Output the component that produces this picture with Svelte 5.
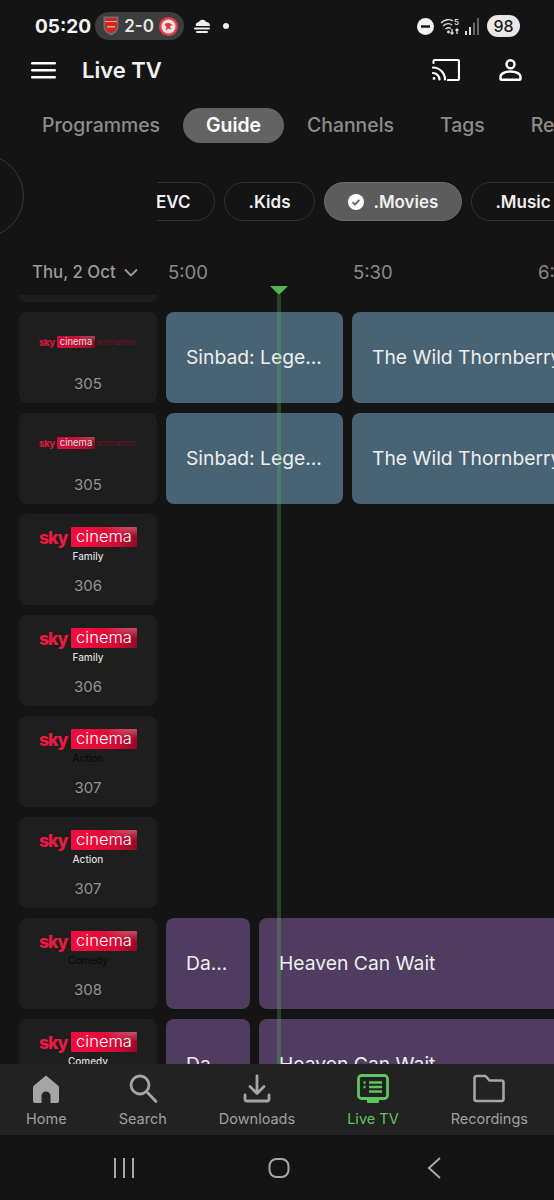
<script>
  const tabs = ["Programmes", "Guide", "Channels", "Tags", "Recordings"];
  const times = ["5:00", "5:30", "6:00"];

  const sinbad = [
    { title: "Sinbad: Lege...", width: 177 },
    { title: "The Wild Thornberrys Movie", width: 300 }
  ];
  const comedy = [
    { title: "Da...", width: 84 },
    { title: "Heaven Can Wait", width: 400 }
  ];

  const rows = [
    { num: "305", sub: "animation", kind: "teal", shows: sinbad },
    { num: "305", sub: "animation", kind: "teal", shows: sinbad },
    { num: "306", sub: "Family", shows: [] },
    { num: "306", sub: "Family", shows: [] },
    { num: "307", sub: "Action", dark: true, shows: [] },
    { num: "307", sub: "Action", shows: [] },
    { num: "308", sub: "Comedy", dark: true, kind: "purple", shows: comedy },
    { num: "308", sub: "Comedy", kind: "purple", shows: comedy }
  ];
</script>

<div class="screen">
  <div class="status">
    <span class="clock">05:20</span>
    <div class="score">
      <svg width="16" height="20" viewBox="0 0 16 20">
        <path d="M.5.500h15v10c0 4-3 7-7.500 9C3.500 17.500.5 14.500.5 10.500z" fill="#6b6f7c" />
        <path d="M2 2h12v3H2z" fill="#d8202c" />
        <path d="M2 5h12v1.200H2z" fill="#d9b45a" />
        <path d="M2 6.200h12v4.300c0 3-2 5.300-6 7-4-1.700-6-4-6-7z" fill="#d8202c" />
        <path d="M4 10h8v1.500H4z" fill="#d9b45a" />
      </svg>
      <span>2-0</span>
      <svg width="19" height="19" viewBox="0 0 19 19">
        <circle cx="9.500" cy="9.500" r="9.500" fill="#e2404c" />
        <circle cx="9.500" cy="9.500" r="7" fill="#f6dfe0" />
        <path d="M5.500 7.500c3-2.500 6.500-1.500 8 1-1 0-2 .2-2.700 1l1.700 3-3-1-3 2 1-3.500z" fill="#dc3844" />
      </svg>
    </div>
    <svg class="cloud" width="18" height="16" viewBox="0 0 18 16">
      <path d="M3 8c-1-3 2-4 3-4 1-3 6-3 7 0 3 0 4 2 4 4z" fill="#eee" />
      <rect x="1" y="9.500" width="16" height="2" rx="1" fill="#eee" />
      <rect x="3" y="13" width="12" height="2" rx="1" fill="#eee" />
    </svg>
    <span class="dot"></span>
    <span class="grow"></span>
    <svg width="17" height="17" viewBox="0 0 17 17">
      <circle cx="8.500" cy="8.500" r="8.500" fill="#f2f2f2" />
      <rect x="4" y="7.300" width="9" height="2.400" fill="#141414" />
    </svg>
    <svg class="wifi" width="21" height="19" viewBox="0 0 21 19" fill="none" stroke="#ddd" stroke-width="1.300">
      <path d="M1 6c4-4 9-4 12-2" />
      <path d="M3 9c3-3 7-3 9-1" />
      <path d="M5.500 12c2-1.500 4-1.500 5.500-.5" />
      <circle cx="8.500" cy="15" r=".8" fill="#ddd" />
      <path d="M12 12v5M10.500 15.500l1.500 1.500 1.500-1.500M17 17v-5M15.500 13.500l1.500-1.500 1.500 1.500" />
      <text x="14" y="8" class="wifi-five">5</text>
    </svg>
    <svg class="signal" width="15" height="17" viewBox="0 0 15 17">
      <rect x="0" y="13" width="2" height="4" fill="#ddd" />
      <rect x="4" y="9" width="2" height="8" fill="#ddd" />
      <rect x="8" y="4.500" width="2" height="12.500" fill="#666" />
      <rect x="12" y="0" width="2" height="17" fill="#666" />
    </svg>
    <span class="battery">98</span>
  </div>

  <header>
    <svg width="25" height="17" viewBox="0 0 25 17">
      <rect y="0" width="25" height="2.600" rx="1.300" fill="#fff" />
      <rect y="7" width="25" height="2.600" rx="1.300" fill="#fff" />
      <rect y="14" width="25" height="2.600" rx="1.300" fill="#fff" />
    </svg>
    <h1>Live TV</h1>
    <span class="grow"></span>
    <svg width="28" height="22" viewBox="0 0 28 22" fill="none" stroke="#fff" stroke-width="2.200" stroke-linecap="round">
      <path d="M1.500 4V2.500a1.500 1.500 0 0 1 1.500-1.500h22.500a1.500 1.500 0 0 1 1.500 1.500v17a1.500 1.500 0 0 1-1.500 1.500H16" />
      <path d="M1 8.500c6.500 0 12 5.500 12 12" />
      <path d="M1 14c3.500 0 6.500 3 6.500 6.500" />
      <circle cx="2" cy="19.500" r="1.400" fill="#fff" stroke="none" />
    </svg>
    <svg class="person" width="23" height="22" viewBox="0 0 23 22" fill="none" stroke="#fff" stroke-width="2.400">
      <circle cx="11.500" cy="5.200" r="4" />
      <path d="M1.500 18c0-3.500 5-5.500 10-5.500s10 2 10 5.500v1.500a1.300 1.300 0 0 1-1.300 1.300H2.800a1.300 1.300 0 0 1-1.300-1.300z" />
    </svg>
  </header>

  <nav class="tabs">
    {#each tabs as tab}
      <span class="tab" class:active={tab === "Guide"}>{tab}</span>
    {/each}
  </nav>

  <div class="filters">
    <div class="filters-left"><span class="ring"></span></div>
    <div class="chips">
      <span class="chip evc">EVC</span>
      <span class="chip kids">.Kids</span>
      <span class="chip selected">
        <svg width="16" height="16" viewBox="0 0 16 16">
          <circle cx="8" cy="8" r="8" fill="#fff" />
          <path d="M4.500 8.200l2.400 2.400 4.400-4.800" fill="none" stroke="#666" stroke-width="1.800" />
        </svg>
        .Movies
      </span>
      <span class="chip">.Music</span>
    </div>
  </div>

  <div class="timeline">
    <div class="date-row">
      <div class="date">
        Thu, 2 Oct
        <svg width="14" height="9" viewBox="0 0 14 9" fill="none" stroke="#9c9c9c" stroke-width="1.800">
          <path d="M1 1.500l6 6 6-6" />
        </svg>
      </div>
      <div class="times">
        {#each times as time}
          <span class="time">{time}</span>
        {/each}
      </div>
    </div>

    <div class="guide">
      <div class="row"><div class="channel stub"></div></div>
      {#each rows as row}
        <div class="row">
          <div class="channel">
            {#if row.sub === "animation"}
              <div class="logo small">
                <span class="sky">sky</span>
                <span class="cinema">cinema</span>
                <span class="anim">animation</span>
              </div>
            {:else}
              <div class="logo">
                <span class="sky">sky</span>
                <span class="cinema">cinema</span>
              </div>
              <div class="sub" class:dark={row.dark}>{row.sub}</div>
            {/if}
            <div class="num">{row.num}</div>
          </div>
          {#each row.shows as show}
            <div class="show {row.kind}" style="width: {show.width}px">{show.title}</div>
          {/each}
        </div>
      {/each}
    </div>

    <div class="now">
      <span class="now-head"></span>
      <span class="now-line"></span>
    </div>
  </div>

  <nav class="bottom">
    <div class="item">
      <svg width="30" height="30" viewBox="0 0 30 30">
        <path d="M15 1.500L27 11.500c.6.500 1 1.300 1 2.100V27a2 2 0 0 1-2 2h-6.500v-7a4.500 4.500 0 0 0-9 0v7H4a2 2 0 0 1-2-2V13.600c0-.8.400-1.600 1-2.100z" fill="#a5a5a5" />
      </svg>
      <span>Home</span>
    </div>
    <div class="item">
      <svg width="30" height="30" viewBox="0 0 30 30" fill="none" stroke="#a5a5a5" stroke-width="2.800" stroke-linecap="round">
        <circle cx="12" cy="11" r="9" />
        <path d="M18.500 17.500L28 27.500" />
      </svg>
      <span>Search</span>
    </div>
    <div class="item">
      <svg width="30" height="30" viewBox="0 0 30 30" fill="none" stroke="#a5a5a5" stroke-width="2.800" stroke-linecap="round" stroke-linejoin="round">
        <path d="M15 2v17M8 12.500l7 7 7-7" />
        <path d="M3 21v4a2 2 0 0 0 2 2h20a2 2 0 0 0 2-2v-4" />
      </svg>
      <span>Downloads</span>
    </div>
    <div class="item on">
      <svg width="32" height="30" viewBox="0 0 32 30" fill="none">
        <rect x="1.500" y="1.500" width="29" height="23" rx="3" stroke="#5cc65c" stroke-width="2.800" />
        <rect x="10" y="25" width="12" height="4" rx="1" fill="#5cc65c" />
        <path d="M6.500 8.500h2M12 8.500h13M6.500 13h2M12 13h13M12 17.500h13" stroke="#5cc65c" stroke-width="2.400" />
      </svg>
      <span>Live TV</span>
    </div>
    <div class="item">
      <svg width="32" height="30" viewBox="0 0 32 30" fill="none" stroke="#a5a5a5" stroke-width="2.600" stroke-linejoin="round">
        <path d="M1.500 4a2 2 0 0 1 2-2h9l4 4.500h12a2 2 0 0 1 2 2V25a2 2 0 0 1-2 2h-25a2 2 0 0 1-2-2z" />
      </svg>
      <span>Recordings</span>
    </div>
  </nav>

  <div class="system">
    <svg width="20" height="20" viewBox="0 0 20 20" fill="#a8a8a8">
      <rect x="0" y="0" width="2" height="20" />
      <rect x="9" y="0" width="2" height="20" />
      <rect x="18" y="0" width="2" height="20" />
    </svg>
    <svg class="home-key" width="22" height="20" viewBox="0 0 22 20" fill="none" stroke="#a8a8a8" stroke-width="2">
      <rect x="1.500" y="1" width="19" height="18" rx="7" />
    </svg>
    <svg width="14" height="22" viewBox="0 0 14 22" fill="none" stroke="#a8a8a8" stroke-width="2">
      <path d="M13 1L2 11l11 10" />
    </svg>
  </div>
</div>

<style>
  :global(body) {
    background: #141414;
    overflow: hidden;
  }

  .screen {
    width: 554px;
    height: 1200px;
    display: flex;
    flex-direction: column;
    background: #141414;
    color: #fff;
    font-family: Inter, "Liberation Sans", sans-serif;
    overflow: hidden;
  }

  .grow {
    flex: 1;
  }

  .status {
    height: 52px;
    flex: none;
    display: flex;
    align-items: center;
    padding: 0 34px 0 35px;
  }

  .clock {
    font-size: 19px;
    font-weight: 700;
    color: #f4f4f4;
    width: 60px;
  }

  .score {
    width: 89px;
    height: 28px;
    box-sizing: border-box;
    padding: 0 6px 0 8px;
    border-radius: 14px;
    background: #3d3d3d;
    display: flex;
    align-items: center;
    justify-content: space-between;
    font-size: 17px;
    font-weight: 600;
    color: #e8e8e8;
  }

  .cloud {
    margin-left: 9px;
  }

  .dot {
    width: 6px;
    height: 6px;
    border-radius: 50%;
    background: #eee;
    margin-left: 12px;
  }

  .wifi {
    margin-left: 6px;
  }

  .wifi-five {
    font-size: 8px;
    font-weight: 600;
    fill: #ddd;
    stroke: none;
  }

  .signal {
    margin-left: 4px;
  }

  .battery {
    width: 33px;
    height: 22px;
    margin-left: 7px;
    border-radius: 11px;
    background: #e8e8e8;
    color: #1a1a1a;
    font-size: 16px;
    font-weight: 500;
    text-align: center;
    line-height: 22px;
  }

  header {
    height: 36px;
    flex: none;
    display: flex;
    align-items: center;
    padding: 0 32px 0 31px;
  }

  h1 {
    margin: 0 0 0 26px;
    font-size: 22px;
    font-weight: 600;
    color: #f2f2f2;
  }

  .person {
    margin-left: 39px;
  }

  .tabs {
    height: 35px;
    flex: none;
    margin-top: 20px;
    padding-left: 19px;
    display: flex;
    align-items: center;
    white-space: nowrap;
  }

  .tab {
    padding: 0 23px;
    line-height: 35px;
    border-radius: 18px;
    font-size: 19.400px;
    font-weight: 500;
    color: #8c8c8c;
  }

  .tab.active {
    background: #636363;
    color: #fff;
    font-weight: 600;
  }

  .filters {
    height: 39px;
    flex: none;
    margin-top: 39px;
    display: flex;
  }

  .filters-left {
    width: 157px;
    flex: none;
    position: relative;
  }

  .ring {
    position: absolute;
    left: -60px;
    top: -28px;
    width: 82px;
    height: 82px;
    border: 1px solid #3a3a3a;
    border-radius: 50%;
  }

  .chips {
    flex: 1;
    display: flex;
    gap: 9px;
    overflow: hidden;
  }

  .chip {
    flex: none;
    display: flex;
    align-items: center;
    gap: 9px;
    box-sizing: border-box;
    height: 39px;
    padding: 0 23px;
    border: 1px solid #333;
    border-radius: 20px;
    font-size: 17px;
    font-weight: 600;
    color: #f0f0f0;
  }

  .evc {
    margin-left: -25px;
    padding-right: 23px;
  }

  .kids {
    padding: 0 24px;
  }

  .selected {
    background: #5c5c5c;
    border-color: #6d6d6d;
    padding: 0 23px;
  }

  .timeline {
    flex: 1;
    min-height: 0;
    position: relative;
    display: flex;
    flex-direction: column;
  }

  .date-row {
    height: 74px;
    flex: none;
    display: flex;
    align-items: center;
    padding: 28px 0 0 32px;
    box-sizing: border-box;
  }

  .date {
    width: 136px;
    flex: none;
    display: flex;
    align-items: center;
    gap: 8px;
    font-size: 16.800px;
    font-weight: 500;
    color: #9c9c9c;
  }

  .times {
    display: flex;
  }

  .time {
    width: 185px;
    flex: none;
    font-size: 18.500px;
    color: #8a8a8a;
  }

  .guide {
    flex: 1;
    min-height: 0;
    overflow: hidden;
    display: flex;
    flex-direction: column;
    gap: 10px;
    padding-left: 19px;
  }

  .row {
    flex: none;
    display: flex;
    gap: 9px;
  }

  .channel {
    width: 138px;
    height: 91px;
    flex: none;
    box-sizing: border-box;
    border-radius: 8px;
    background: #1e1e1e;
    display: flex;
    flex-direction: column;
    align-items: center;
    padding-top: 13px;
    position: relative;
  }

  .channel.stub {
    height: 7px;
    padding: 0;
    border-radius: 0 0 8px 8px;
  }

  .logo {
    display: flex;
    align-items: center;
    height: 20px;
  }

  .sky {
    color: #ea1a42;
    font-size: 17.500px;
    font-weight: 800;
    letter-spacing: -1px;
    width: 32px;
  }

  .cinema {
    width: 66px;
    height: 20px;
    text-align: center;
    background:
      radial-gradient(ellipse at 95% 0, rgba(255, 255, 255, 0.3), transparent 35%),
      linear-gradient(100deg, #f00c3c 25%, #d00c34 70%, #900a26);
    color: #fff;
    font-size: 16.500px;
    font-weight: 300;
    line-height: 19px;
    border-radius: 1px;
  }

  .logo.small {
    height: 12px;
    margin-top: 11px;
    opacity: 0.85;
  }

  .small .sky {
    font-size: 9.500px;
    width: 18px;
    letter-spacing: -0.5px;
  }

  .small .cinema {
    width: 38px;
    height: 12px;
    font-size: 9.500px;
    font-weight: 400;
    line-height: 12px;
  }

  .anim {
    width: 41px;
    font-size: 8.500px;
    color: #7d1128;
    margin-left: 1px;
  }

  .sub {
    margin-top: 3px;
    font-size: 10px;
    line-height: 13px;
    font-weight: 500;
    color: #ddd;
  }

  .sub.dark {
    color: #0a0a0a;
  }

  .num {
    position: absolute;
    left: 0;
    right: 0;
    top: 62px;
    text-align: center;
    font-size: 15px;
    line-height: 20px;
    color: #939393;
  }

  .show {
    height: 91px;
    flex: none;
    box-sizing: border-box;
    padding: 0 0 2px 20px;
    border-radius: 8px;
    display: flex;
    align-items: center;
    white-space: nowrap;
    overflow: hidden;
    font-size: 19.300px;
    color: #eee;
  }

  .teal {
    background: #486373;
  }

  .purple {
    background: #503c60;
  }

  .now {
    position: absolute;
    left: 269px;
    top: 65px;
    bottom: 0;
    width: 20px;
    display: flex;
    flex-direction: column;
    align-items: center;
    pointer-events: none;
  }

  .now-head {
    flex: none;
    width: 0;
    height: 0;
    border-left: 9.500px solid transparent;
    border-right: 9.500px solid transparent;
    border-top: 9px solid #52b552;
  }

  .now-line {
    flex: 1;
    width: 4px;
    background: rgba(90, 190, 90, 0.28);
  }

  .bottom {
    height: 71px;
    flex: none;
    background: #222;
    display: flex;
    justify-content: space-around;
    align-items: flex-start;
    padding-top: 10px;
    box-sizing: border-box;
  }

  .item {
    display: flex;
    flex-direction: column;
    align-items: center;
    gap: 6px;
    font-size: 14.500px;
    line-height: 18px;
    color: #a0a0a0;
  }

  .item.on {
    color: #5cc65c;
  }

  .system {
    height: 65px;
    flex: none;
    display: flex;
    align-items: center;
    justify-content: space-between;
    padding: 0 113px 0 114px;
    box-sizing: border-box;
  }

  .home-key {
    margin-right: 4px;
  }
</style>
